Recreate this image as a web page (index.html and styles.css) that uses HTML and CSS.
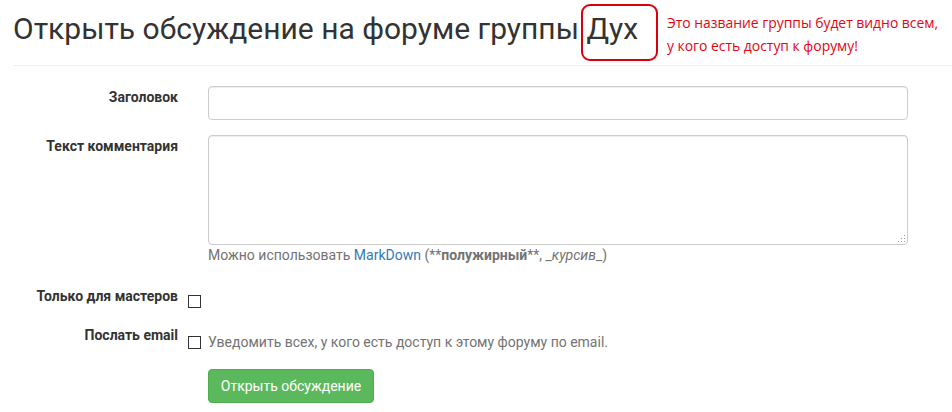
FILE: index.html
```html
<!DOCTYPE html>
<html lang="ru">
<head>
<meta charset="utf-8">
<title>Открыть обсуждение</title>
<link rel="stylesheet" href="styles.css">
</head>
<body>
<div class="page">
  <h1 class="title">Открыть обсуждение на форуме группы Дух</h1>
  <div class="note-box"></div>
  <div class="note-text">Это название группы будет видно всем,<br>у кого есть доступ к форуму!</div>
  <hr class="divider">
  <form class="form">
    <div class="row row-input">
      <label class="lbl" for="title">Заголовок</label>
      <div class="ctrl"><input id="title" class="field" type="text"></div>
    </div>
    <div class="row row-text">
      <label class="lbl" for="body">Текст комментария</label>
      <div class="ctrl">
        <div class="area-wrap">
          <textarea id="body" class="field area"></textarea>
          <span class="grip"></span>
        </div>
        <div class="help">Можно использовать <a class="link" href="#">MarkDown</a> (**<b>полужирный</b>**, _<i>курсив</i>_)</div>
      </div>
    </div>
    <div class="row row-check">
      <label class="lbl" for="masters">Только для мастеров</label>
      <div class="ctrl check-ctrl"><input id="masters" class="cb" type="checkbox"></div>
    </div>
    <div class="row row-check row-email">
      <label class="lbl" for="email">Послать email</label>
      <div class="ctrl check-ctrl"><input id="email" class="cb" type="checkbox"><span class="check-text">Уведомить всех, у кого есть доступ к этому форуму по email.</span></div>
    </div>
    <div class="row row-btn">
      <div class="lbl"></div>
      <div class="ctrl"><button type="button" class="btn">Открыть обсуждение</button></div>
    </div>
  </form>
</div>
</body>
</html>
```
FILE: styles.css
```css
* { box-sizing: border-box; }
html, body { margin: 0; padding: 0; background: #fff; }
body {
  font-family: Roboto, "Liberation Sans", sans-serif;
  font-size: 14px;
  line-height: 20px;
  color: #333;
}
.page {
  position: relative;
  padding-left: 13px;
  width: 952px;
  height: 412px;
  overflow: hidden;
}
.title {
  margin: 12px 0 0 0;
  font-size: 30px;
  font-weight: 400;
  line-height: 33px;
  color: #333;
}
.note-box {
  position: absolute;
  left: 581px;
  top: 4px;
  width: 77px;
  height: 57px;
  border: 2px solid #d9000d;
  border-radius: 9px;
}
.note-text {
  position: absolute;
  left: 667px;
  top: 11px;
  font-family: "Open Sans", "DejaVu Sans", sans-serif;
  font-size: 13.9px;
  line-height: 23px;
  color: #e30613;
  white-space: nowrap;
}
.divider {
  margin: 20px 0 0 0;
  border: 0;
  border-top: 1px solid #eee;
  height: 0;
}
.form { padding-top: 20px; }
.row {
  display: grid;
  grid-template-columns: 165px 700px;
  column-gap: 30px;
}
.lbl {
  text-align: right;
  font-weight: 700;
  padding-top: 1px;
}
.row-input { margin-bottom: 15px; }
.row-text { margin-bottom: 21px; }
.row-check { margin-bottom: 12px; }
.row-check .lbl { padding-top: 0; }
.row-email { margin-bottom: 17px; }
.field {
  display: block;
  width: 700px;
  height: 34px;
  padding: 6px 12px;
  font: inherit;
  color: #555;
  background: #fff;
  border: 1px solid #ccc;
  border-radius: 4px;
  box-shadow: inset 0 1px 1px rgba(0,0,0,.075);
}
.area-wrap { position: relative; }
.area {
  height: 110px;
  resize: none;
}
.grip {
  position: absolute;
  right: 3px;
  bottom: 3px;
  width: 8px;
  height: 8px;
  background-image: radial-gradient(circle, #9a9a9a 0.9px, transparent 1px);
  background-size: 3px 3px;
  clip-path: polygon(100% 0, 100% 100%, 0 100%);
}
.help { color: #737373; }
.help b { font-weight: 700; }
.link { color: #337ab7; text-decoration: none; }
.check-ctrl {
  display: flex;
  align-items: center;
  margin-left: -20px;
  padding-top: 7px;
  gap: 7px;
  height: 27px;
}
.row-check:not(.row-email) .check-ctrl { align-items: flex-start; padding-top: 9px; }
.cb {
  appearance: none;
  -webkit-appearance: none;
  width: 13px;
  height: 13px;
  margin: 0;
  border: 1px solid #333;
  background: #fff;
  border-radius: 0;
  flex: none;
}
.check-text { color: #737373; }
.btn {
  display: block;
  width: 166px;
  height: 34px;
  padding: 6px 0;
  font: inherit;
  white-space: nowrap;
  text-align: center;
  color: #fff;
  background: #5cb85c;
  border: 1px solid #4cae4c;
  border-radius: 4px;
}
```
